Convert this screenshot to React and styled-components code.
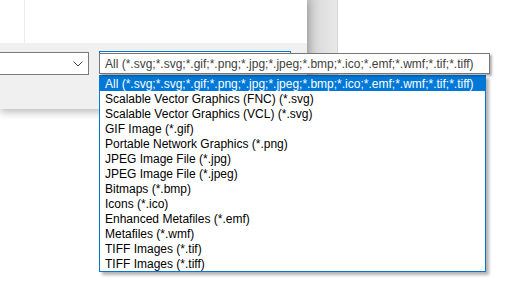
import React from 'react';
import styled, { createGlobalStyle } from 'styled-components';

const GlobalStyle = createGlobalStyle`
  html, body {
    margin: 0;
    padding: 0;
    background: #ffffff;
    overflow: hidden;
  }
  body {
    font-family: "Liberation Sans", Arial, sans-serif;
    font-size: 12px;
  }
`;

const Screen = styled.div`
  width: 507px;
  height: 287px;
  position: relative;
  overflow: hidden;
  background: #ffffff;
`;

const WindowRow = styled.div`
  display: flex;
  align-items: flex-start;
`;

const Dialog = styled.div`
  width: 307px;
  height: 109px;
  display: flex;
  flex-direction: column;
  box-shadow: 0 3px 8px rgba(0, 0, 0, 0.28);
  position: relative;
  z-index: 1;
`;

const ContentArea = styled.div`
  height: 43px;
  background: #ffffff;
  display: flex;
`;

const Gutter = styled.div`
  width: 24px;
  border-right: 1px solid #ebebeb;
`;

const Footer = styled.div`
  flex: 1;
  background: #f0f0f0;
  display: flex;
  align-items: flex-start;
  gap: 10px;
  padding-top: 9px;
  margin-left: -1px;
`;

const EdgeShadow = styled.div`
  width: 30px;
  height: 112px;
  background: linear-gradient(to right, #c4c4c4, #dcdcdc 40%, #e9e9e9);
  border-right: 1px solid #d6d6d6;
`;

const Combo = styled.div`
  box-sizing: border-box;
  width: ${p => p.$width}px;
  height: 23px;
  background: #ffffff;
  border: 1px solid ${p => (p.$focused ? '#0078d7' : '#7a7a7a')};
  display: flex;
  align-items: center;
  justify-content: flex-end;
  padding-right: 5px;
  position: relative;
  margin-top: ${p => (p.$focused ? '-1px' : '0')};
`;

const Chevron = () => (
  <svg width="10" height="6" viewBox="0 0 10 6">
    <path d="M0.5 0.5 L5 5 L9.5 0.5" fill="none" stroke="#444" strokeWidth="1" />
  </svg>
);

const FullTextTip = styled.div`
  position: absolute;
  left: -1px;
  top: 1px;
  box-sizing: border-box;
  width: 391px;
  height: 21px;
  background: #ffffff;
  border: 1px solid #767676;
  box-shadow: 2px 2px 2px rgba(0, 0, 0, 0.3);
  color: #404040;
  padding-left: 5px;
  padding-top: 1px;
  line-height: 19px;
  white-space: nowrap;
  z-index: 3;
`;

const DropList = styled.ul`
  position: absolute;
  left: -1px;
  top: 23px;
  box-sizing: border-box;
  width: 387px;
  margin: 0;
  padding: 0;
  list-style: none;
  background: #ffffff;
  border: 1px solid #0078d7;
  box-shadow: 3px 3px 3px rgba(0, 0, 0, 0.3);
  z-index: 2;
`;

const Option = styled.li`
  box-sizing: border-box;
  height: 15px;
  line-height: 15px;
  padding: 1px 0 0 5px;
  white-space: nowrap;
  color: ${p => (p.$selected ? '#ffffff' : '#000000')};
  background: ${p => (p.$selected ? '#0078d7' : 'transparent')};
`;

const allTypes = 'All (*.svg;*.svg;*.gif;*.png;*.jpg;*.jpeg;*.bmp;*.ico;*.emf;*.wmf;*.tif;*.tiff)';

const filters = [
  allTypes,
  'Scalable Vector Graphics (FNC) (*.svg)',
  'Scalable Vector Graphics (VCL) (*.svg)',
  'GIF Image (*.gif)',
  'Portable Network Graphics (*.png)',
  'JPEG Image File (*.jpg)',
  'JPEG Image File (*.jpeg)',
  'Bitmaps (*.bmp)',
  'Icons (*.ico)',
  'Enhanced Metafiles (*.emf)',
  'Metafiles (*.wmf)',
  'TIFF Images (*.tif)',
  'TIFF Images (*.tiff)',
];

const App = () => {
  return (
    <Screen>
      <GlobalStyle />
      <WindowRow>
        <Dialog>
          <ContentArea>
            <Gutter />
          </ContentArea>
          <Footer>
            <Combo $width={90}>
              <Chevron />
            </Combo>
            <Combo $width={192} $focused>
              <FullTextTip>{allTypes}</FullTextTip>
              <DropList>
                {filters.map((f, i) => (
                  <Option key={i} $selected={i === 0}>{f}</Option>
                ))}
              </DropList>
            </Combo>
          </Footer>
        </Dialog>
        <EdgeShadow />
      </WindowRow>
    </Screen>
  );
};

export default App;
